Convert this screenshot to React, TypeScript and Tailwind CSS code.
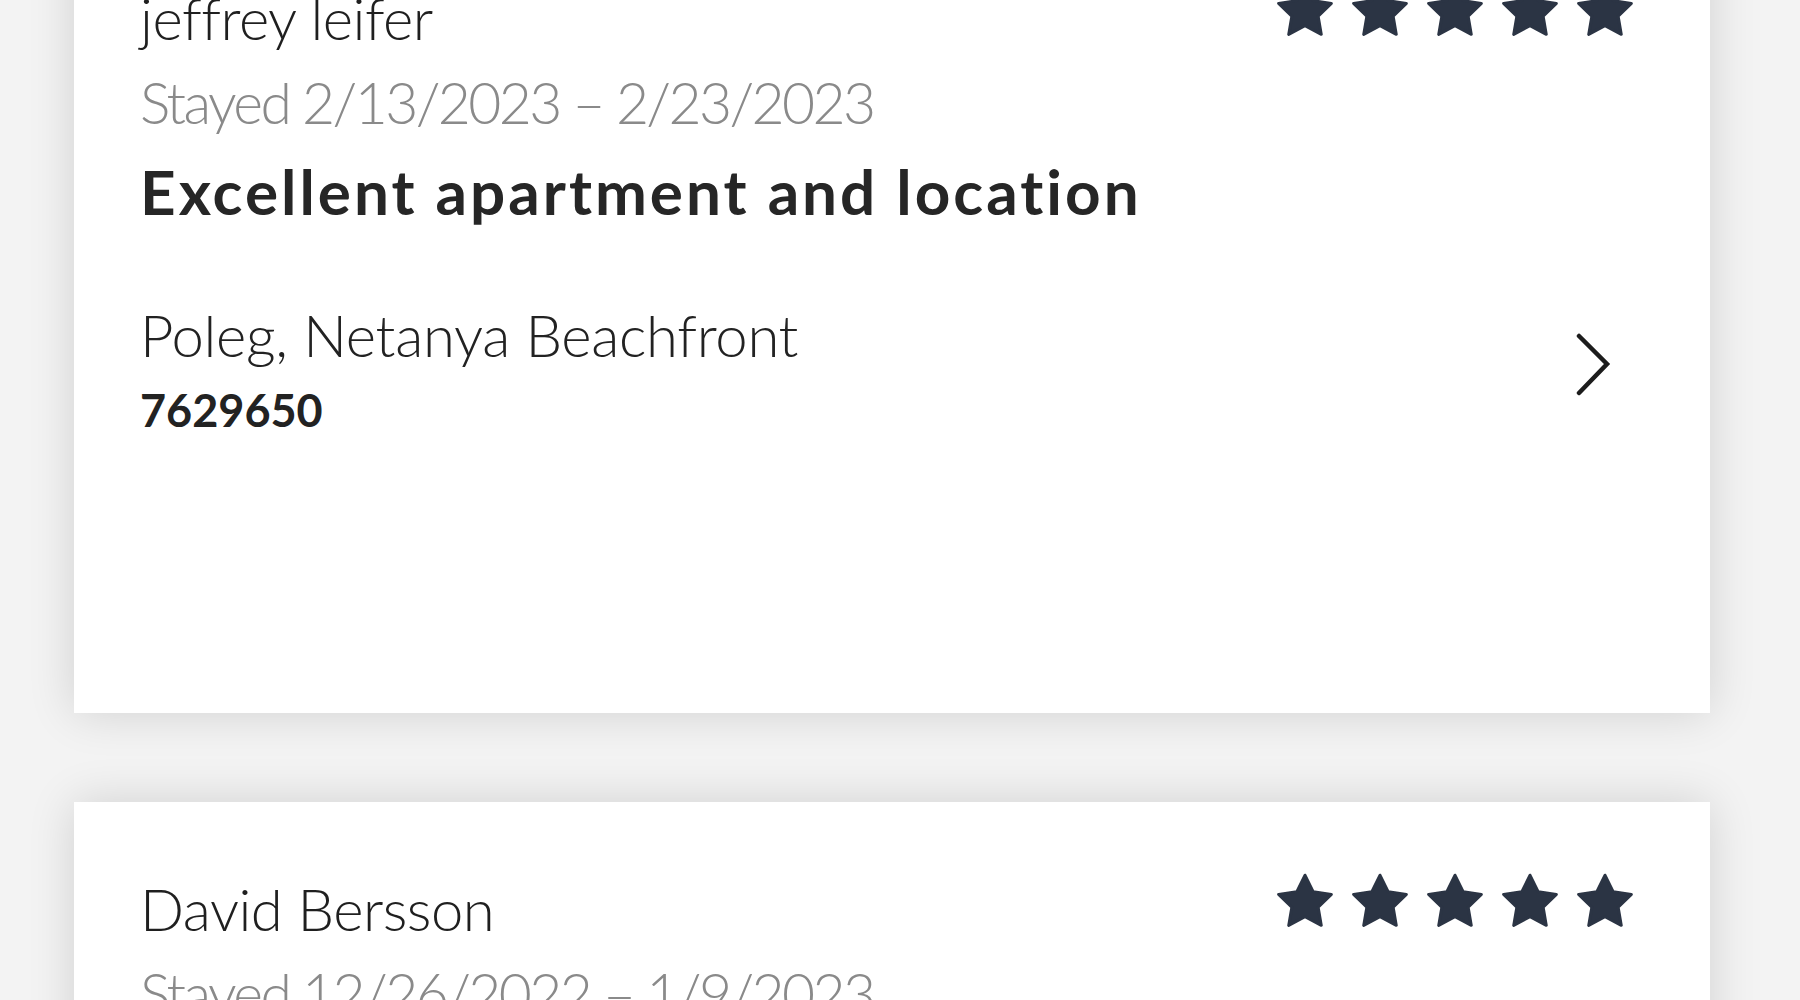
import React from 'react';

interface Review {
    name: string;
    stayed: string;
    title: string;
    property: string;
    propertyId: string;
    rating: number;
}

const REVIEWS: Review[] = [
    {
        name: 'jeffrey leifer',
        stayed: 'Stayed 2/13/2023 – 2/23/2023',
        title: 'Excellent apartment and location',
        property: 'Poleg, Netanya Beachfront',
        propertyId: '7629650',
        rating: 5
    },
    {
        name: 'David Bersson',
        stayed: 'Stayed 12/26/2022 – 1/9/2023',
        title: 'Wonderful stay by the sea',
        property: 'Poleg, Netanya Beachfront',
        propertyId: '7629650',
        rating: 5
    }
];

const StarIcon = () => (
    <svg width="56" height="55" viewBox="1.4 1.4 21.2 20.4" className="shrink-0">
        <polygon
            points="12,2 15.09,8.26 22,9.27 17,14.14 18.18,21.02 12,17.77 5.82,21.02 7,14.14 2,9.27 8.91,8.26"
            fill="#2b3444"
            stroke="#2b3444"
            strokeWidth="1.1"
            strokeLinejoin="round"
        />
    </svg>
);

const Chevron = () => (
    <svg width="36" height="64" viewBox="0 0 36 64" className="shrink-0">
        <path d="M4 3 L32 31 L4 60" fill="none" stroke="#1c1c1c" strokeWidth="4.5" strokeLinecap="round" strokeLinejoin="miter" />
    </svg>
);

const ReviewCard: React.FC<{ review: Review }> = ({ review }) => {
    return (
        <div className="bg-white h-[802px] pl-[66px] pr-[77px] pt-[65px] shadow-[0_0_44px_rgba(0,0,0,0.14)]">
            {/* Header */}
            <div className="flex items-start justify-between">
                <div className="text-[58px] leading-[84px] font-light text-[#1f1f1f] tracking-[-0.5px]">{review.name}</div>
                <div className="flex gap-[19px] mt-[6px]">
                    {Array.from({ length: review.rating }).map((_, i) => (
                        <StarIcon key={i} />
                    ))}
                </div>
            </div>
            <div className="text-[57px] leading-[84px] font-light text-[#8a8a8a] tracking-[-2.6px]">{review.stayed}</div>
            <div className="text-[62px] leading-[95px] font-bold text-[#262626] tracking-[3px]">{review.title}</div>

            {/* Property link */}
            <div className="flex items-center justify-between mt-[54px]">
                <div>
                    <div className="text-[58px] leading-[84px] font-light text-[#222] tracking-[-0.3px]">{review.property}</div>
                    <div className="text-[45px] leading-[67px] font-bold text-[#222]">{review.propertyId}</div>
                </div>
                <div className="mr-[22px] mt-[-8px]">
                    <Chevron />
                </div>
            </div>
        </div>
    );
};

export default function App() {
    return (
        <div className="h-[1000px] overflow-hidden bg-[#f3f3f3]" style={{ fontFamily: 'Lato, "Open Sans", sans-serif' }}>
            <div className="flex flex-col gap-[89px] mt-[-89px] pl-[74px] pr-[90px]">
                {REVIEWS.map((r) => (
                    <ReviewCard key={r.name} review={r} />
                ))}
            </div>
        </div>
    );
}
